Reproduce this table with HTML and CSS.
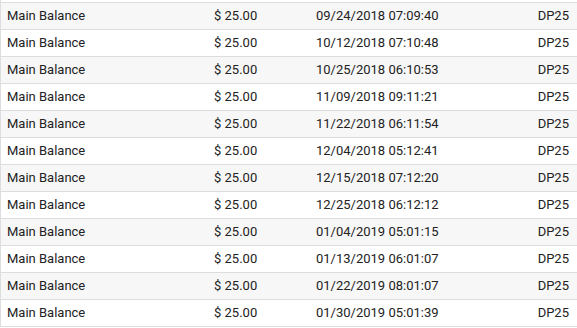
FILE: index.html
```html
<!DOCTYPE html>
<html>
<head>
<meta charset="utf-8">
<link rel="stylesheet" href="styles.css">
</head>
<body>
<div class="table">
  <div class="row odd"><span class="c1">Main Balance</span><span class="c2">$ 25.00</span><span class="c3">09/24/2018 07:09:40</span><span class="c4">DP25</span></div>
  <div class="row"><span class="c1">Main Balance</span><span class="c2">$ 25.00</span><span class="c3">10/12/2018 07:10:48</span><span class="c4">DP25</span></div>
  <div class="row odd"><span class="c1">Main Balance</span><span class="c2">$ 25.00</span><span class="c3">10/25/2018 06:10:53</span><span class="c4">DP25</span></div>
  <div class="row"><span class="c1">Main Balance</span><span class="c2">$ 25.00</span><span class="c3">11/09/2018 09:11:21</span><span class="c4">DP25</span></div>
  <div class="row odd"><span class="c1">Main Balance</span><span class="c2">$ 25.00</span><span class="c3">11/22/2018 06:11:54</span><span class="c4">DP25</span></div>
  <div class="row"><span class="c1">Main Balance</span><span class="c2">$ 25.00</span><span class="c3">12/04/2018 05:12:41</span><span class="c4">DP25</span></div>
  <div class="row odd"><span class="c1">Main Balance</span><span class="c2">$ 25.00</span><span class="c3">12/15/2018 07:12:20</span><span class="c4">DP25</span></div>
  <div class="row"><span class="c1">Main Balance</span><span class="c2">$ 25.00</span><span class="c3">12/25/2018 06:12:12</span><span class="c4">DP25</span></div>
  <div class="row odd"><span class="c1">Main Balance</span><span class="c2">$ 25.00</span><span class="c3">01/04/2019 05:01:15</span><span class="c4">DP25</span></div>
  <div class="row"><span class="c1">Main Balance</span><span class="c2">$ 25.00</span><span class="c3">01/13/2019 06:01:07</span><span class="c4">DP25</span></div>
  <div class="row odd"><span class="c1">Main Balance</span><span class="c2">$ 25.00</span><span class="c3">01/22/2019 08:01:07</span><span class="c4">DP25</span></div>
  <div class="row"><span class="c1">Main Balance</span><span class="c2">$ 25.00</span><span class="c3">01/30/2019 05:01:39</span><span class="c4">DP25</span></div>
</div>
</body>
</html>
```
FILE: styles.css
```css
html, body {
  margin: 0;
  padding: 0;
  background: #fff;
}
body {
  font-family: Roboto, "Liberation Sans", sans-serif;
  font-size: 13px;
  color: #222;
}
.table {
  padding-top: 2px;
  border-left: 1px solid #ddd;
}
.row {
  display: grid;
  grid-template-columns: 207px 102px 1fr auto;
  height: 26px;
  line-height: 26px;
  border-top: 1px solid #ddd;
  padding-left: 6px;
  padding-right: 8px;
  background: #fff;
}
.row:last-child {
  border-bottom: 1px solid #ddd;
}
.row.odd {
  background: #f7f7f7;
}
.c4 {
  text-align: right;
}
```
